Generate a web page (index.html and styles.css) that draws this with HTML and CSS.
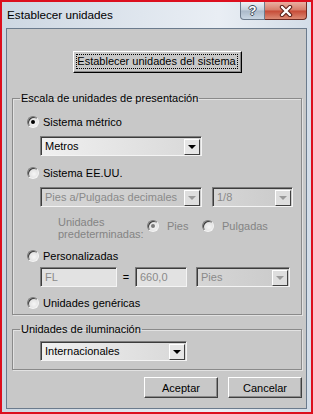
FILE: index.html
```html
<!DOCTYPE html>
<html lang="es">
<head>
  <meta charset="UTF-8" />
  <meta name="viewport" content="width=device-width, initial-scale=1.0"/>
  <title>Establecer unidades</title>
  <link rel="stylesheet" href="styles.css">
</head>
<body>
  <div class="ventana">
    <div class="barra-titulo">
      <span class="titulo">Establecer unidades</span>
      <div class="botones-titulo">
        <span class="btn-ayuda">?</span>
        <span class="btn-cerrar">
          <svg width="14" height="12" viewBox="0 0 14 12">
            <path d="M3 2 L11 10 M11 2 L3 10" stroke="#5a2018" stroke-width="4.4" stroke-linecap="round"/>
            <path d="M3 2 L11 10 M11 2 L3 10" stroke="#fff" stroke-width="2.4" stroke-linecap="round"/>
          </svg>
        </span>
      </div>
    </div>

    <div class="cliente">
      <div class="fila-sistema">
        <button class="boton boton-sistema"><span class="foco">Establecer unidades del sistema</span></button>
      </div>

      <fieldset class="grupo grupo-escala">
        <legend>Escala de unidades de presentación</legend>

        <div class="opcion op-metrico"><span class="radio marcado"></span>Sistema métrico</div>
        <div class="fila fila-metros">
          <div class="combo c-metros"><span class="valor">Metros</span><span class="flecha"></span></div>
        </div>

        <div class="opcion op-eeuu"><span class="radio"></span>Sistema EE.UU.</div>
        <div class="fila fila-eeuu">
          <div class="combo desactivado c-pies-pulg"><span class="valor">Pies a/Pulgadas decimales</span><span class="flecha"></span></div>
          <div class="combo desactivado c-fraccion"><span class="valor">1/8</span><span class="flecha"></span></div>
        </div>

        <div class="fila fila-pred">
          <div class="texto-pred">Unidades<br>predeterminadas:</div>
          <div class="opcion-mini op-pies"><span class="radio marcado gris"></span>Pies</div>
          <div class="opcion-mini"><span class="radio"></span>Pulgadas</div>
        </div>

        <div class="opcion op-personal"><span class="radio"></span>Personalizadas</div>
        <div class="fila fila-personal">
          <div class="campo c-nombre">FL</div>
          <span class="igual">=</span>
          <div class="campo c-valor">660,0</div>
          <div class="combo desactivado c-unidad"><span class="valor">Pies</span><span class="flecha"></span></div>
        </div>

        <div class="opcion op-genericas"><span class="radio"></span>Unidades genéricas</div>
      </fieldset>

      <fieldset class="grupo grupo-luz">
        <legend>Unidades de iluminación</legend>
        <div class="fila fila-luz">
          <div class="combo c-luz"><span class="valor">Internacionales</span><span class="flecha"></span></div>
        </div>
      </fieldset>

      <div class="acciones">
        <button class="boton boton-accion">Aceptar</button>
        <button class="boton boton-accion">Cancelar</button>
      </div>
    </div>
  </div>
</body>
</html>
```

FILE: styles.css
```css
body {
  margin: 0;
  background-color: #fff;
  font-family: "Liberation Sans", Arial, sans-serif;
}

.ventana {
  width: 313px;
  height: 414px;
  box-sizing: border-box;
  border: 2px solid #dc0f1e;
  background: linear-gradient(to right, #cdd7e2, #dfe6ee 45%, #e9eef4 70%, #d3dde8);
  display: flex;
  flex-direction: column;
}

.barra-titulo {
  height: 26px;
  display: flex;
  justify-content: space-between;
  align-items: flex-start;
}

.titulo {
  font-size: 11.7px;
  line-height: 14px;
  margin: 6px 0 0 5px;
  color: #000;
}

.botones-titulo {
  display: flex;
  margin-right: 4px;
}

.btn-ayuda {
  width: 25px;
  height: 18px;
  box-sizing: border-box;
  border: 1px solid #6c7b8c;
  border-top: none;
  border-radius: 0 0 0 4px;
  background: linear-gradient(#eef2f6, #c3cfdb 48%, #aab9c9 52%, #c9d6e3);
  color: #fff;
  font-weight: bold;
  font-size: 13px;
  line-height: 17px;
  text-align: center;
  text-shadow: 1px 0 0 #3c4a58, -1px 0 0 #3c4a58, 0 1px 0 #3c4a58, 0 -1px 0 #3c4a58;
}

.btn-cerrar {
  width: 42px;
  height: 18px;
  box-sizing: border-box;
  border: 1px solid #6e2a22;
  border-top: none;
  border-left: none;
  border-radius: 0 0 4px 0;
  background: linear-gradient(#eab0a2, #d67c69 48%, #c64a36 52%, #dc8a74);
  display: flex;
  align-items: center;
  justify-content: center;
}

.cliente {
  flex: 1;
  margin: 0 4px 3px 4px;
  border: 1px solid #6b7b8d;
  background-color: #c8c8c8;
  font-size: 11px;
  color: #000;
  display: flex;
  flex-direction: column;
}

.fila-sistema {
  padding-top: 22px;
  text-align: center;
}

.boton {
  font-family: "Liberation Sans", Arial, sans-serif;
  font-size: 11px;
  color: #000;
  background-color: #c8c8c8;
  border: 1px solid;
  border-color: #fff #404040 #404040 #fff;
  box-shadow: inset -1px -1px 0 #8a8a8a;
  box-sizing: border-box;
  cursor: pointer;
}

.boton-sistema {
  width: 169px;
  height: 22px;
  padding: 2px 3px 3px 2px;
  margin-left: 1px;
  border-color: #fff #000 #000 #fff;
}

.foco {
  display: block;
  border: 1px dotted #000;
  line-height: 13px;
}

.grupo {
  border: 1px solid #8a8a8a;
  box-shadow: 1px 1px 0 #e2e2e2, inset 1px 1px 0 #e2e2e2;
  margin: 0 4px 0 5px;
  padding: 0;
  min-width: 0;
}

.grupo legend {
  margin-left: 7px;
  padding: 0 1px;
  line-height: 13px;
  font-size: 11px;
}

.grupo-escala {
  margin-top: 19px;
  padding-bottom: 4px;
}

.grupo-luz {
  margin-top: 8px;
  padding-bottom: 8px;
}

.opcion {
  display: flex;
  align-items: center;
  gap: 4px;
  height: 14px;
  margin-left: 14px;
}

.op-metrico { margin-top: 10px; }
.op-eeuu { margin-top: 10px; }
.op-personal { margin-top: 9px; }
.op-genericas { margin-top: 9px; }

.radio {
  width: 12px;
  height: 12px;
  box-sizing: border-box;
  border-radius: 50%;
  border: 1px solid;
  border-color: #7c7c7c #f4f4f4 #f4f4f4 #7c7c7c;
  box-shadow: inset 1px 1px 0 #3c3c3c;
  background: radial-gradient(circle at 60% 60%, #f6f6f6, #d2d2d2);
  display: flex;
  align-items: center;
  justify-content: center;
  flex-shrink: 0;
}

.radio.marcado::after {
  content: "";
  width: 4px;
  height: 4px;
  border-radius: 50%;
  background-color: #000;
}

.radio.gris::after {
  background-color: #7a7a7a;
}

.fila {
  display: flex;
  align-items: center;
  margin-left: 27px;
}

.fila-metros { margin-top: 7px; }
.fila-eeuu { margin-top: 7px; gap: 10px; }
.fila-personal { margin-top: 4px; }
.fila-luz { margin-top: 5px; }

.combo {
  height: 20px;
  box-sizing: border-box;
  border: 1px solid;
  border-color: #7c7c7c #f4f4f4 #f4f4f4 #7c7c7c;
  box-shadow: inset 1px 1px 0 #3c3c3c;
  background: linear-gradient(to right, #f0f0f0, #d8d8d8);
  display: flex;
  align-items: center;
}

.combo .valor {
  flex: 1;
  padding-left: 4px;
  white-space: nowrap;
  overflow: hidden;
}

.flecha {
  width: 16px;
  height: 16px;
  box-sizing: border-box;
  margin: 1px 1px 0 0;
  border: 1px solid;
  border-color: #fff #404040 #404040 #fff;
  background-color: #e6e6e6;
  display: flex;
  align-items: center;
  justify-content: center;
}

.flecha::after {
  content: "";
  border-top: 4px solid #000;
  border-left: 4px solid transparent;
  border-right: 4px solid transparent;
}

.combo.desactivado {
  background: linear-gradient(to right, #d6d6d6, #cacaca);
  color: #8a8a8a;
}

.combo.desactivado .flecha {
  background-color: #dedede;
}

.combo.desactivado .flecha::after {
  border-top-color: #9a9a9a;
}

.c-metros { width: 162px; }
.c-pies-pulg { width: 162px; }
.c-fraccion { width: 81px; }
.c-unidad { width: 94px; margin-left: 9px; }
.c-luz { width: 147px; }

.fila-pred {
  margin-top: 9px;
  margin-left: 45px;
  align-items: flex-start;
  color: #848484;
}

.texto-pred {
  width: 89px;
  line-height: 12px;
}

.opcion-mini {
  display: flex;
  align-items: center;
  gap: 8px;
  margin-top: 4px;
  height: 12px;
}

.op-pies { width: 55px; }

.campo {
  height: 20px;
  box-sizing: border-box;
  border: 1px solid;
  border-color: #7c7c7c #f4f4f4 #f4f4f4 #7c7c7c;
  box-shadow: inset 1px 1px 0 #3c3c3c;
  background-color: #e2e2e2;
  color: #8a8a8a;
  padding-left: 4px;
  line-height: 18px;
}

.c-nombre { width: 77px; }
.c-valor { width: 52px; }

.igual {
  width: 18px;
  text-align: center;
}

.acciones {
  display: flex;
  justify-content: flex-end;
  gap: 10px;
  margin: 7px 4px 0 0;
}

.boton-accion {
  width: 74px;
  height: 21px;
  padding: 0;
}
```
